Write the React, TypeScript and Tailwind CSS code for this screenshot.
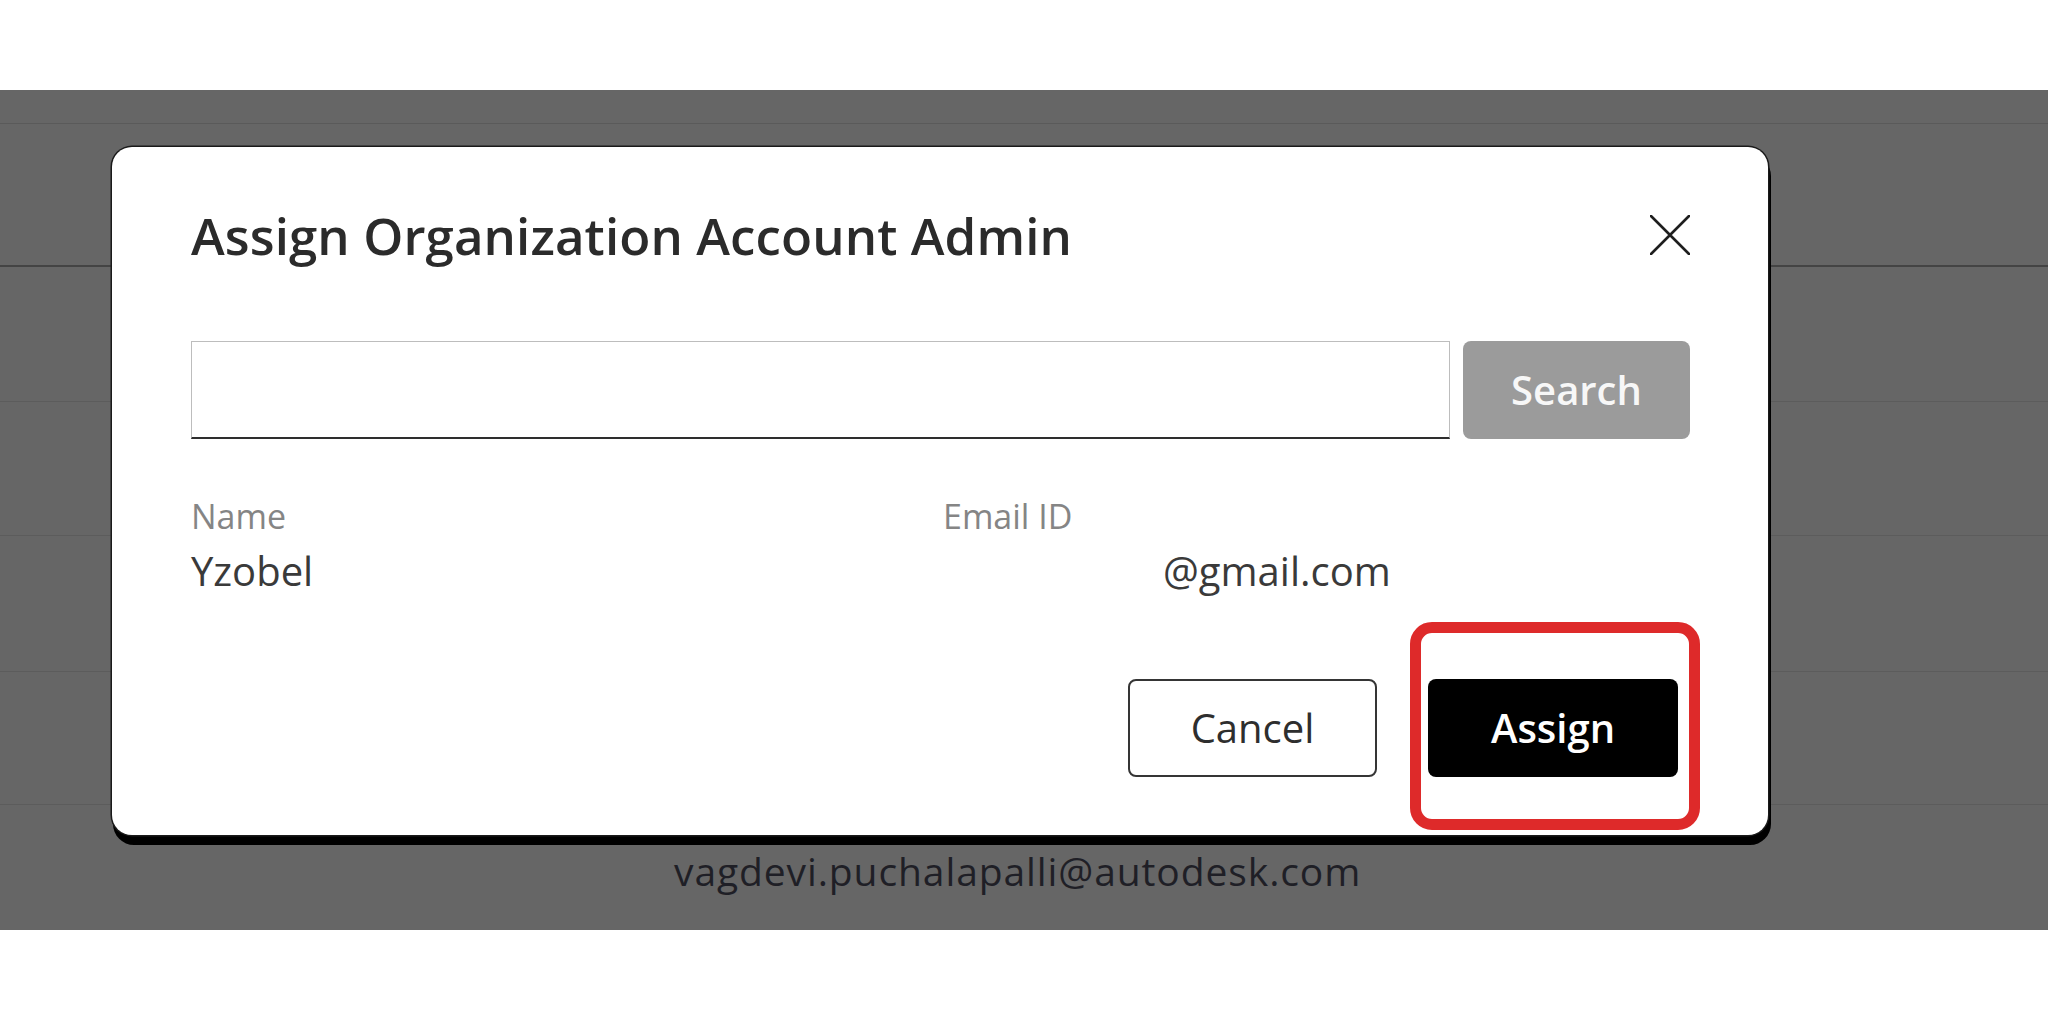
import React from "react";

const font = { fontFamily: '"Open Sans", "Noto Sans", Arial, sans-serif' };

export default function App() {
  return (
    <div className="relative w-[2048px] h-[1021px] bg-white overflow-hidden" style={font}>
      <div className="h-[90px] bg-white" />
      {/* dimmed page behind the modal */}
      <div className="h-[840px] bg-[#666666] flex flex-col">
        <div className="h-[34px] border-b border-[#5a5a5a]" />
        <div className="h-[143px] border-b-2 border-[#444444]" />
        <div className="h-[135px] border-b border-[#5c5c5c]" />
        <div className="h-[134px] border-b border-[#5c5c5c]" />
        <div className="h-[136px] border-b border-[#5c5c5c]" />
        <div className="h-[133px] border-b border-[#5c5c5c]" />
        <div className="flex-1 pl-[674px] pt-[42px]">
          <span className="text-[39px] leading-[48px] tracking-[0.9px] text-[#1f1f26]">
            vagdevi.puchalapalli@autodesk.com
          </span>
        </div>
      </div>
      <div className="h-[91px] bg-white" />

      {/* modal */}
      <div className="absolute left-[112px] top-[147px] w-[1656px] bg-white rounded-[20px] shadow-[0_0_0_1.5px_#1a1a1a,2px_9px_0_1px_#000] pl-[79px] pr-[78px] pt-[57px] pb-[58px]">
        <div className="flex items-center justify-between h-[62px]">
          <h1 className="text-[51px] leading-[62px] font-semibold text-[#2b2b2b] tracking-[0.1px]">
            Assign Organization Account Admin
          </h1>
          <svg width="40" height="40" viewBox="0 0 40 40" className="shrink-0">
            <path d="M1 1 L39 39 M39 1 L1 39" stroke="#1e1e1e" strokeWidth="2.6" strokeLinecap="round" />
          </svg>
        </div>

        <div className="flex gap-[13px] mt-[75px] h-[98px]">
          <div className="w-[1259px] h-full border border-[#bdbdbd] border-b-2 border-b-[#2e2e2e]" />
          <button className="w-[227px] h-full rounded-[8px] bg-[#9b9b9b] text-[#f7f7f7] text-[40px] font-semibold leading-none">
            Search
          </button>
        </div>

        <div className="grid grid-cols-[752px_1fr] mt-[57px]">
          <div>
            <div className="text-[34px] leading-[40px] text-[#858585]">Name</div>
            <div className="text-[40px] leading-[48px] text-[#3a3a3a] mt-[11px]">Yzobel</div>
          </div>
          <div>
            <div className="text-[34px] leading-[40px] text-[#858585]">Email ID</div>
            <div className="text-[40px] leading-[48px] text-[#3a3a3a] mt-[11px] pl-[220px]">@gmail.com</div>
          </div>
        </div>

        <div className="flex justify-end gap-[51px] pr-[12px] mt-[84px]">
          <button className="w-[249px] h-[98px] rounded-[8px] border-2 border-[#353535] bg-white text-[40px] text-[#2e2e2e] leading-none">
            Cancel
          </button>
          <div className="relative">
            <button className="w-[250px] h-[98px] rounded-[8px] bg-black text-white text-[40px] font-semibold leading-none">
              Assign
            </button>
            <div className="absolute left-[-18px] top-[-57px] right-[-22px] bottom-[-53px] border-[11px] border-[#de2a2a] rounded-[22px] pointer-events-none" />
          </div>
        </div>
      </div>
    </div>
  );
}
